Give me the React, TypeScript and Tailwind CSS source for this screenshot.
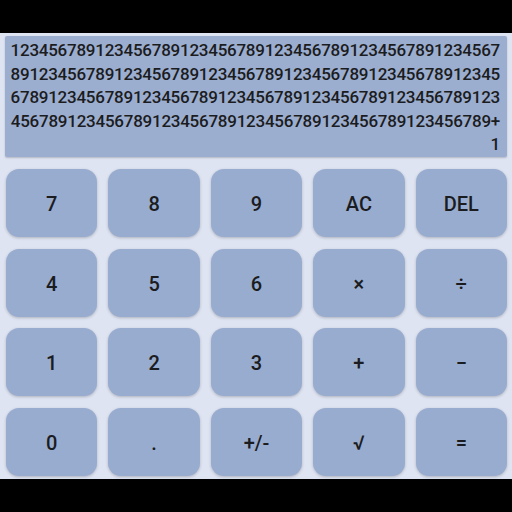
const expression = "123456789".repeat(23) + "+1";

const keys = [
    "7", "8", "9", "AC", "DEL",
    "4", "5", "6", "×", "÷",
    "1", "2", "3", "+", "−",
    "0", ".", "+/-", "√", "=",
];

export default function App() {
    return (
        <div className="flex h-[512px] w-[512px] flex-col bg-black font-['Roboto',sans-serif] text-[#1b1c20]">
            <div className="h-[33px]" />
            <div className="flex h-[446px] flex-col bg-[#dfe4f3] px-[5px] pt-[3px]">
                <div className="h-[121px] overflow-hidden rounded-[2px] bg-[#9caed0] pl-[3px] pr-[7px] pt-[3px] shadow-[0_1px_2px_rgba(0,0,0,0.2)]">
                    <p className="break-all text-right text-[17px] font-medium leading-[23.5px] tracking-[-0.25px]">
                        {expression}
                    </p>
                </div>
                <div className="mt-[12px] grid grid-cols-5 gap-x-[11px] gap-y-[11.6px] pl-[1px]">
                    {keys.map((key) => (
                        <button
                            key={key}
                            className="flex h-[68px] items-center justify-center rounded-[13px] bg-[#98acd0] pt-[2px] text-[20px] font-medium shadow-[0_1px_3px_rgba(0,0,0,0.22)]"
                        >
                            {key}
                        </button>
                    ))}
                </div>
            </div>
            <div className="flex-1" />
        </div>
    );
}
